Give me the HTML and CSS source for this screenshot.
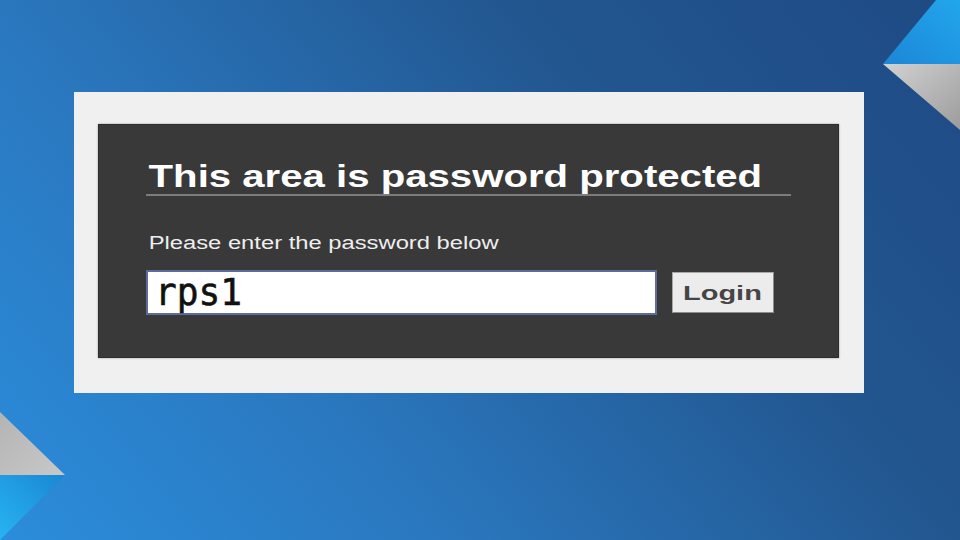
FILE: index.html
```html
<!DOCTYPE html>
<html lang="en">
<head>
    <meta charset="UTF-8">
    <meta name="viewport" content="width=device-width, initial-scale=1.0">
    <title>Password protected</title>
    <link rel="stylesheet" href="styles.css">
</head>
<body>

<!-- Corner decorations -->
<svg class="corner corner-top" width="80" height="132" viewBox="0 0 80 132">
    <defs>
        <linearGradient id="blueTop" x1="0" y1="1" x2="1" y2="0">
            <stop offset="0" stop-color="#1c86d6"/>
            <stop offset="1" stop-color="#22a6ec"/>
        </linearGradient>
        <linearGradient id="grayTop" x1="0" y1="0" x2="1" y2="1">
            <stop offset="0" stop-color="#d2d2d2"/>
            <stop offset="1" stop-color="#9c9c9c"/>
        </linearGradient>
    </defs>
    <polygon points="3,64 56,0 80,0 80,64" fill="url(#blueTop)"/>
    <polygon points="3,64 80,64 80,130" fill="url(#grayTop)"/>
</svg>

<svg class="corner corner-bottom" width="66" height="128" viewBox="0 0 66 128">
    <defs>
        <linearGradient id="grayBottom" x1="0" y1="0" x2="1" y2="1">
            <stop offset="0" stop-color="#b4b4b4"/>
            <stop offset="1" stop-color="#c8c8c8"/>
        </linearGradient>
        <linearGradient id="blueBottom" x1="1" y1="0" x2="0" y2="1">
            <stop offset="0" stop-color="#1a86d4"/>
            <stop offset="1" stop-color="#28b4f2"/>
        </linearGradient>
    </defs>
    <polygon points="0,0 65,63 0,63" fill="url(#grayBottom)"/>
    <polygon points="0,63 65,63 0,128" fill="url(#blueBottom)"/>
</svg>

<!-- Screenshot frame -->
<div class="stage">
    <div class="frame">
        <div class="panel">
            <h1 class="panel-title"><span class="stretch title-text">This area is password protected</span></h1>
            <p class="panel-hint"><span class="stretch hint-text">Please enter the password below</span></p>
            <div class="login-row">
                <div class="password-box"><span class="stretch password-text">rps1</span></div>
                <div class="login-btn"><span class="stretch btn-text">Login</span></div>
            </div>
        </div>
    </div>
</div>

</body>
</html>
```

FILE: styles.css
```css
html, body {
    margin: 0;
    width: 960px;
    height: 540px;
    overflow: hidden;
}
body {
    position: relative;
    font-family: "Liberation Sans", Arial, sans-serif;
    background: linear-gradient(50deg, #2b8ddb 0%, #2a77be 32%, #22568f 68%, #1f4a84 100%);
}
.corner {
    position: absolute;
    display: block;
}
.corner-top {
    top: 0;
    right: 0;
}
.corner-bottom {
    left: 0;
    top: 412px;
}
.stage {
    padding: 92px 0 0 74px;
}
.frame {
    box-sizing: border-box;
    width: 790px;
    height: 301px;
    padding: 32px 25px 35px 24px;
    background-color: #f0f0f0;
}
.panel {
    box-sizing: border-box;
    height: 100%;
    padding: 34px 47px 0 47px;
    background-color: #393939;
    border: 1px solid #2d2d2d;
    box-shadow: 0 0 2px rgba(0, 0, 0, 0.35);
}
.stretch {
    display: inline-block;
    transform-origin: left center;
    white-space: nowrap;
}
.panel-title {
    margin: 0;
    padding: 0;
    font-size: 31px;
    line-height: 35px;
    font-weight: bold;
    color: #ffffff;
    border-bottom: 2px solid #7c7c7c;
}
.title-text {
    padding-left: 2px;
    transform: scaleX(1.295);
}
.panel-hint {
    margin: 37px 0 0 0;
    font-size: 18px;
    line-height: 20px;
    color: #eeeeee;
}
.hint-text {
    padding-left: 2px;
    transform: scaleX(1.32);
}
.login-row {
    display: flex;
    align-items: center;
    gap: 15px;
    margin-top: 17px;
}
.password-box {
    box-sizing: border-box;
    width: 511px;
    height: 45px;
    padding-left: 7px;
    background-color: #ffffff;
    border: 2px solid #5c6c9c;
    font-family: "DejaVu Sans Mono", monospace;
    font-size: 38px;
    line-height: 41px;
    color: #111111;
}
.password-text {
    transform: scaleX(0.95);
    -webkit-text-stroke: 0.6px #111111;
}
.login-btn {
    box-sizing: border-box;
    width: 102px;
    height: 41px;
    padding-left: 10px;
    background-color: #ececec;
    border: 1px solid #a8a8a8;
    border-right-color: #8c8c8c;
    border-bottom-color: #8c8c8c;
    font-size: 21px;
    line-height: 39px;
    font-weight: bold;
    color: #454545;
}
.btn-text {
    transform: scaleX(1.38);
}
```
